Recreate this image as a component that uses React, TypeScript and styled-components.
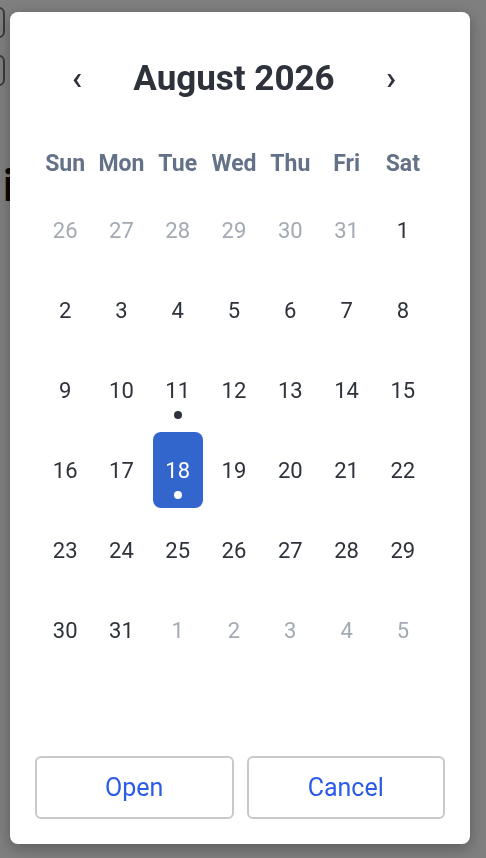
import React from "react";
import styled, { createGlobalStyle } from "styled-components";

const GlobalStyle = createGlobalStyle`
    html, body {
        margin: 0;
        padding: 0;
        background: #ffffff;
        font-family: Roboto, "Liberation Sans", Arial, sans-serif;
    }
    * {
        box-sizing: border-box;
    }
`;

type Day = { day: number; muted?: boolean; event?: boolean; selected?: boolean };

const weekdays = ["Sun", "Mon", "Tue", "Wed", "Thu", "Fri", "Sat"];

function buildDays(): Day[] {
    const days: Day[] = [];
    [26, 27, 28, 29, 30, 31].forEach(d => days.push({ day: d, muted: true }));
    for (let d = 1; d <= 31; d++) {
        days.push({ day: d, event: d === 11 || d === 18, selected: d === 18 });
    }
    [1, 2, 3, 4, 5].forEach(d => days.push({ day: d, muted: true }));
    return days;
}

export default function App() {
    const days = buildDays();

    return (
        <React.Fragment>
            <GlobalStyle />
            <Page>
                <BackButton />
                <BackButton />
                <BackTitle>i</BackTitle>
            </Page>
            <Overlay>
                <Modal>
                    <Calendar>
                        <Header>
                            <NavButton aria-label="Previous month">‹</NavButton>
                            <Title>August 2026</Title>
                            <NavButton aria-label="Next month">›</NavButton>
                        </Header>
                        <Weekdays>
                            {weekdays.map(w => (
                                <Weekday key={w}>{w}</Weekday>
                            ))}
                        </Weekdays>
                        <DayGrid>
                            {days.map((d, i) => (
                                <DayCell key={i} $muted={d.muted} $selected={d.selected}>
                                    <span>{d.day}</span>
                                    {d.event && <EventDot $selected={d.selected} />}
                                </DayCell>
                            ))}
                        </DayGrid>
                    </Calendar>
                    <Actions>
                        <ActionButton>Open</ActionButton>
                        <ActionButton>Cancel</ActionButton>
                    </Actions>
                </Modal>
            </Overlay>
        </React.Fragment>
    );
}

const Page = styled.div`
    display: flex;
    flex-direction: column;
    align-items: flex-start;
    padding: 7px 0 0 3px;
    height: 858px;
    overflow: hidden;
`;

const BackButton = styled.div`
    width: 44px;
    height: 31px;
    margin-left: -42px;
    margin-bottom: 17px;
    border: 2px solid #777;
    border-radius: 6px;
    background: #fff;
`;

const BackTitle = styled.h1`
    margin: 61px 0 0;
    font-size: 44px;
    font-weight: 700;
    line-height: 1;
    color: #111;
`;

const Overlay = styled.div`
    position: fixed;
    inset: 0;
    background: rgba(0, 0, 0, 0.5);
    display: flex;
    align-items: flex-start;
    padding: 12px 0 0 10px;
`;

const Modal = styled.div`
    width: 460px;
    height: 832px;
    background: #ffffff;
    border-radius: 8px;
    box-shadow: 0 4px 16px rgba(0, 0, 0, 0.3);
    padding: 38px 25px 25px;
    display: flex;
    flex-direction: column;
`;

const Calendar = styled.div`
    width: 394px;
    margin-left: 2px;
`;

const Header = styled.div`
    height: 56px;
    display: flex;
    align-items: center;
    justify-content: space-between;
    padding: 0 34px;
`;

const NavButton = styled.button`
    border: none;
    background: transparent;
    padding: 0;
    width: 12px;
    font-family: Roboto, "Liberation Sans", Arial, sans-serif;
    font-size: 34px;
    font-weight: 500;
    line-height: 1;
    color: #2e323a;
    cursor: pointer;
    margin-top: -2px;
`;

const Title = styled.h2`
    margin: 0;
    font-size: 35px;
    font-weight: 700;
    color: #2e323a;
    line-height: 1;
`;

const Weekdays = styled.div`
    display: grid;
    grid-template-columns: repeat(7, 1fr);
    margin-top: 37px;
    height: 40px;
    align-items: center;
`;

const Weekday = styled.div`
    text-align: center;
    font-size: 23px;
    font-weight: 700;
    color: #647287;
`;

const DayGrid = styled.div`
    display: grid;
    grid-template-columns: repeat(7, 1fr);
    grid-auto-rows: 76px;
    row-gap: 4px;
    margin-top: 9px;
    justify-items: center;
`;

const DayCell = styled.div<{ $muted?: boolean; $selected?: boolean }>`
    position: relative;
    width: 50px;
    height: 76px;
    border-radius: 8px;
    display: flex;
    align-items: center;
    justify-content: center;
    font-size: 22px;
    color: ${p => (p.$selected ? "#ffffff" : p.$muted ? "#a4aab3" : "#2e323a")};
    background: ${p => (p.$selected ? "#3366cc" : "transparent")};
`;

const EventDot = styled.span<{ $selected?: boolean }>`
    position: absolute;
    left: 50%;
    bottom: 9px;
    width: 8px;
    height: 8px;
    margin-left: -4px;
    border-radius: 50%;
    background: ${p => (p.$selected ? "#ffffff" : "#2e323a")};
`;

const Actions = styled.div`
    margin-top: auto;
    display: flex;
    gap: 13px;
`;

const ActionButton = styled.button`
    flex: 1;
    height: 63px;
    border: 2px solid #c8c9cd;
    border-radius: 6px;
    background: #ffffff;
    font-family: Roboto, "Liberation Sans", Arial, sans-serif;
    font-size: 25px;
    color: #2c5ce6;
    cursor: pointer;
`;
